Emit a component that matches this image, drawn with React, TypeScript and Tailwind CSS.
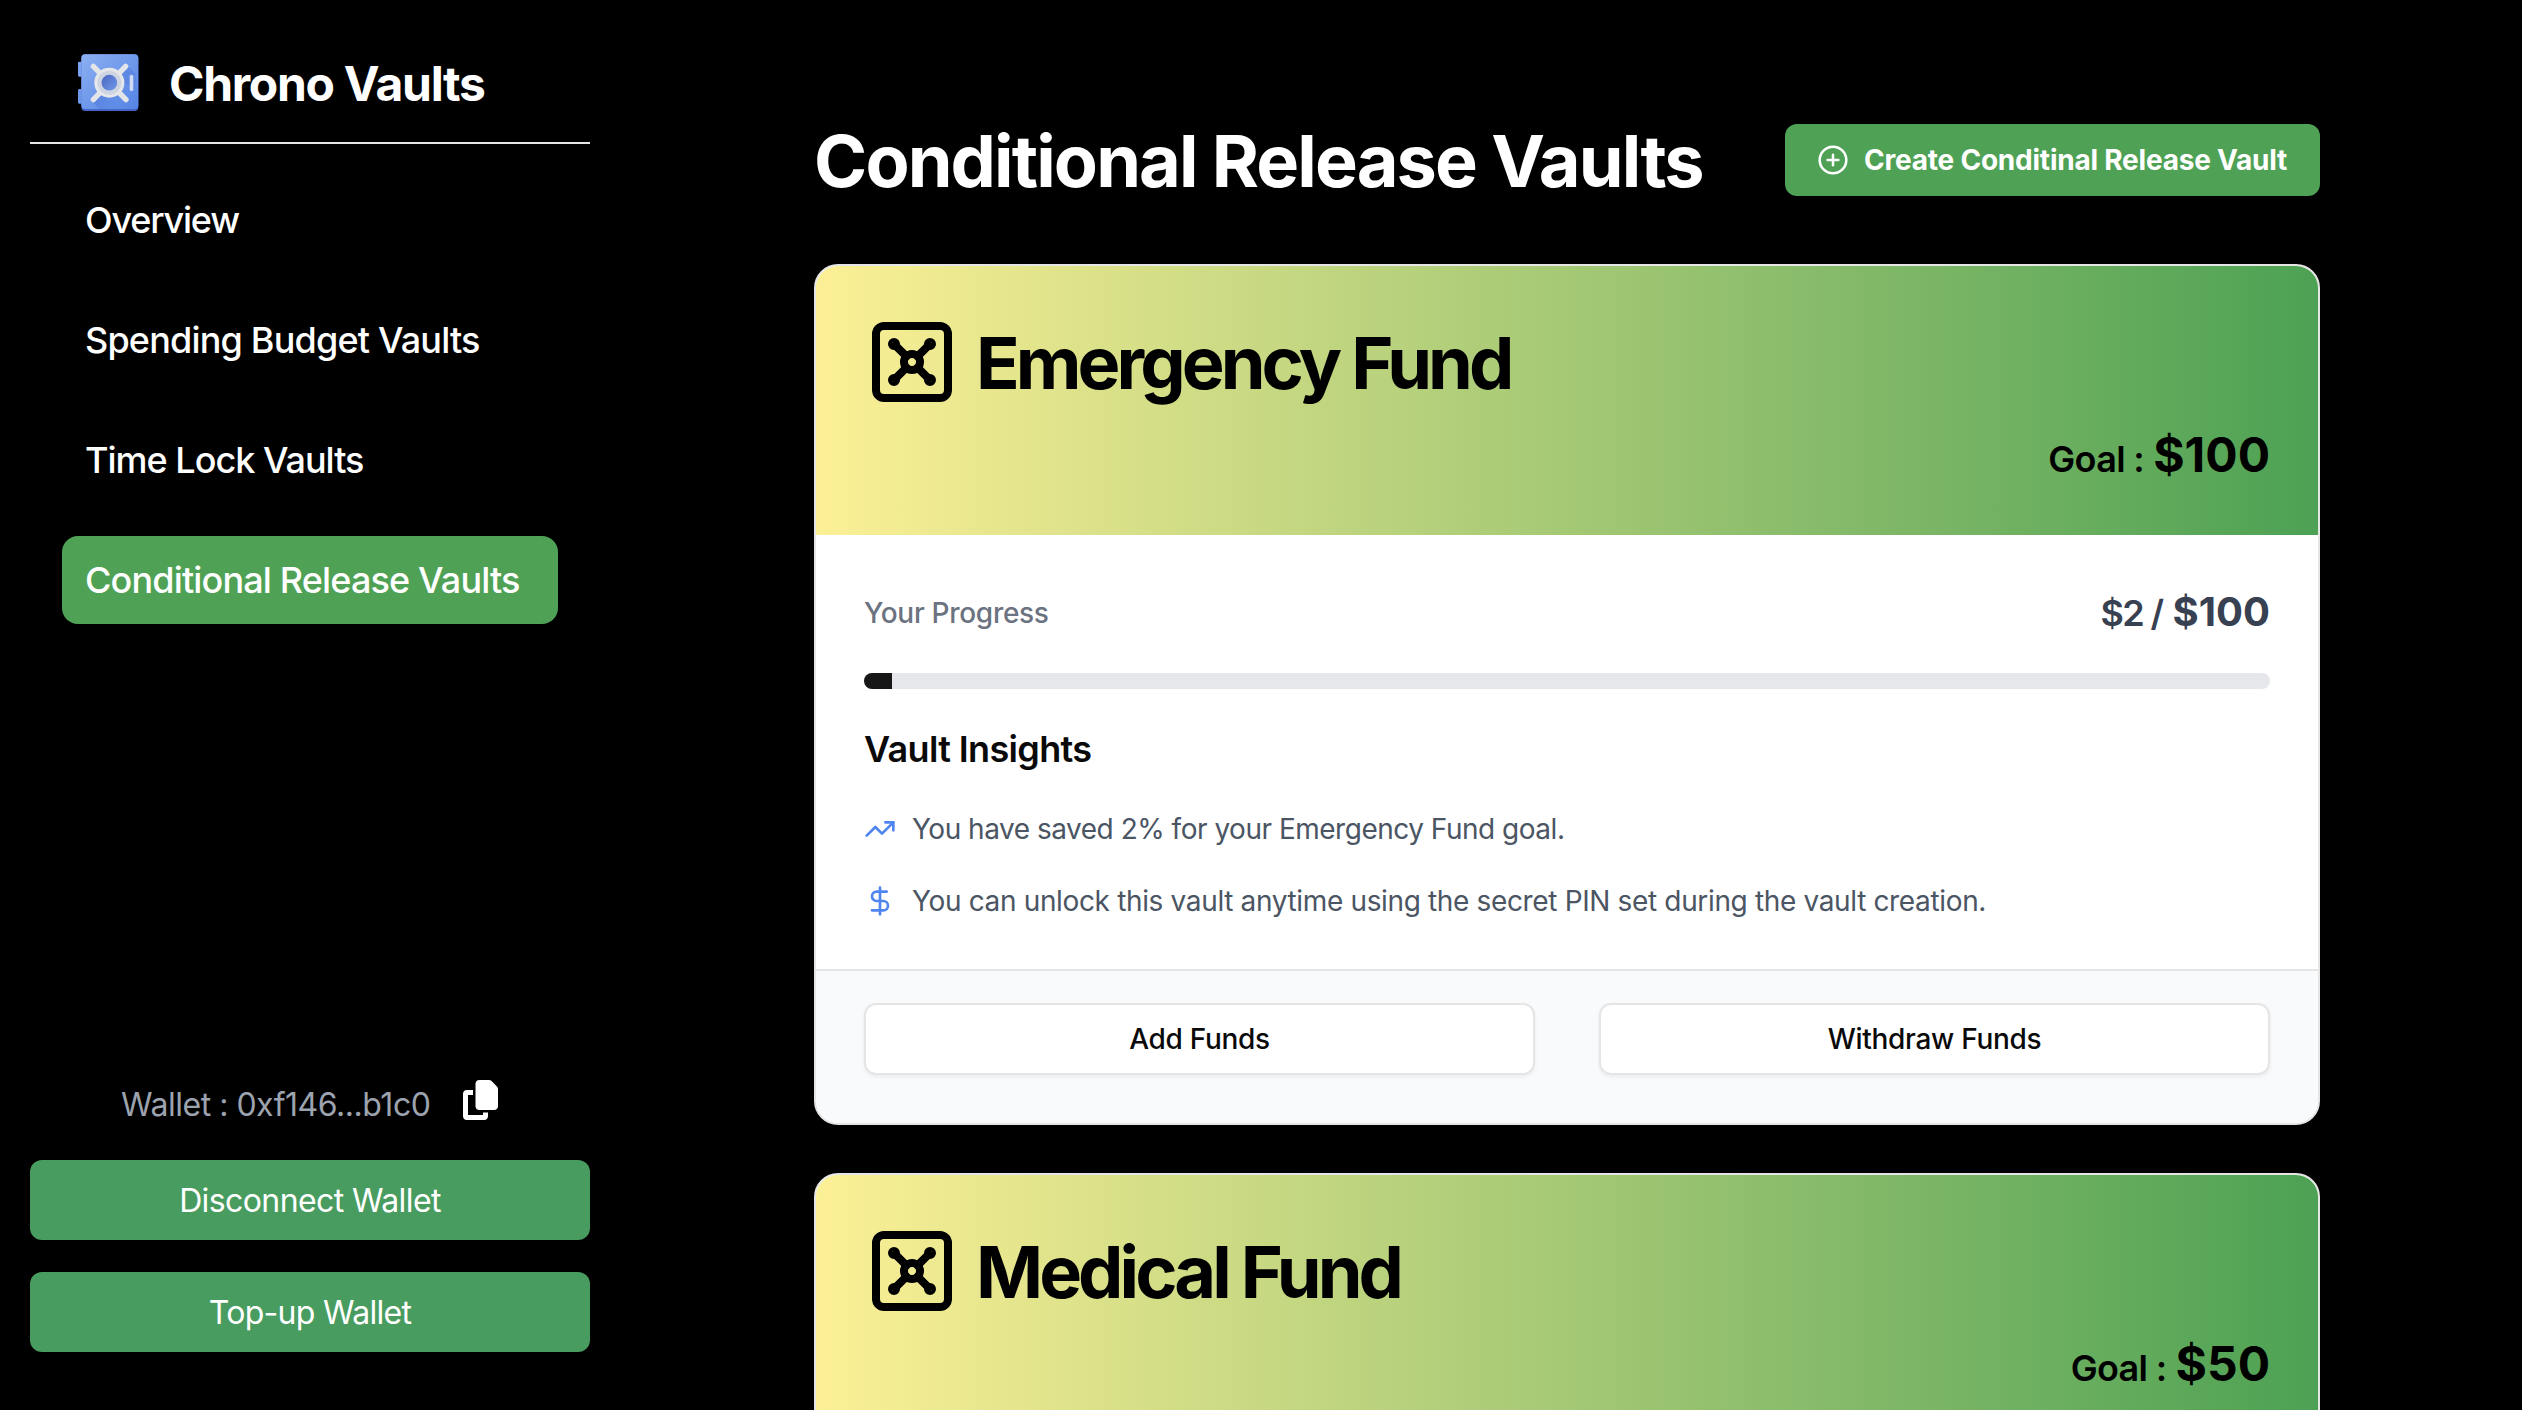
import React from "react";
import { CirclePlus, DollarSign, TrendingUp, Vault } from "lucide-react";
import { FaCopy } from "react-icons/fa6";

function Logo() {
  return (
    <svg viewBox="48 36 192 180" className="h-[60px] w-16 shrink-0" aria-hidden="true">
      <defs>
        <linearGradient id="door" x1="0" y1="0" x2="1" y2="1">
          <stop offset="0" stopColor="#8eb0f2" />
          <stop offset="0.5" stopColor="#6f99eb" />
          <stop offset="1" stopColor="#5584e4" />
        </linearGradient>
        <linearGradient id="shade" gradientUnits="userSpaceOnUse" x1="110" y1="120" x2="200" y2="160">
          <stop offset="0" stopColor="#4a72d4" stopOpacity="0.75" />
          <stop offset="1" stopColor="#5584e4" stopOpacity="0" />
        </linearGradient>
        <linearGradient id="hub" x1="0" y1="0" x2="1" y2="1">
          <stop offset="0" stopColor="#4a66bf" />
          <stop offset="1" stopColor="#6f98ea" />
        </linearGradient>
      </defs>
      <rect x="54" y="65" width="16" height="45" rx="4" fill="#7ba2ee" />
      <rect x="54" y="147" width="16" height="44" rx="4" fill="#6f97ea" />
      <rect x="64" y="43" width="171" height="170" rx="12" fill="#4667c8" />
      <rect x="64" y="43" width="171" height="164" rx="12" fill="url(#door)" />
      <path d="M96 184 L118 207 L200 207 L204 182 L160 130 Z" fill="url(#shade)" />
      <path d="M202 76 L226 100 L226 150 L196 130 L176 104 Z" fill="#5279da" opacity="0.45" />
      <path d="M100 79 L198 179 M197 79 L100 179" stroke="#e4e5e8" strokeWidth="16" strokeLinecap="round" />
      <circle cx="148" cy="128" r="45" fill="#e6e7e9" />
      <circle cx="148" cy="128" r="36" fill="#ced4e2" />
      <circle cx="148" cy="128" r="23.5" fill="url(#hub)" />
      <rect x="209" y="104" width="11" height="49" rx="5.5" fill="#cfdaf3" />
    </svg>
  );
}

const navItems = [
  { label: "Overview", tracking: "tracking-[-1.2px]" },
  { label: "Spending Budget Vaults", tracking: "tracking-[-0.82px]" },
  { label: "Time Lock Vaults", tracking: "tracking-[-1px]" },
  { label: "Conditional Release Vaults", tracking: "tracking-[-0.85px]", active: true },
];

function Sidebar() {
  return (
    <aside className="flex h-full w-[620px] shrink-0 flex-col px-[30px] pb-[58px]">
      <div className="flex h-[144px] shrink-0 items-center gap-[29px] border-b-2 border-[#e5e5e5] pt-[22px] pl-[46px]">
        <Logo />
        <span className="pt-[3px] text-5xl leading-[60px] font-bold tracking-[-1.3px]">Chrono Vaults</span>
      </div>
      <nav className="flex flex-col gap-8 px-8 pt-8">
        {navItems.map((item) => (
          <a
            key={item.label}
            className={`flex h-[88px] items-center rounded-2xl px-[23px] text-[36px] font-medium whitespace-nowrap ${item.tracking} ${
              item.active ? "bg-[#4fa255]" : ""
            }`}
          >
            {item.label}
          </a>
        ))}
      </nav>
      <div className="mt-auto flex flex-col">
        <div className="flex h-[60px] items-start gap-[33px] pb-5 pl-[91px]">
          <span className="pt-px text-[32px] leading-[48px] tracking-[-0.48px] text-[#9ca3af]">
            Wallet : 0xf146...b1c0
          </span>
          <FaCopy className="h-10 w-[35px]" />
        </div>
        <button className="mt-5 h-20 rounded-xl bg-[#489c60] pt-0.5 text-[32px] tracking-[-0.6px]">
          Disconnect Wallet
        </button>
        <button className="mt-8 h-20 rounded-xl bg-[#489c60] pt-0.5 text-[32px] tracking-[-0.7px]">
          Top-up Wallet
        </button>
      </div>
    </aside>
  );
}

interface VaultData {
  name: string;
  saved: number;
  goal: number;
}

function OutlineButton({ children }: { children: React.ReactNode }) {
  return (
    <button className="h-[72px] flex-1 rounded-xl border-2 border-[#e5e5e5] bg-white text-[28px] font-medium tracking-[-0.3px] text-[#0a0a0a] shadow-[0_2px_4px_rgba(0,0,0,0.06)]">
      {children}
    </button>
  );
}

function VaultCard({ name, saved, goal }: VaultData) {
  const percent = (saved / goal) * 100;
  return (
    <section className="shrink-0 overflow-hidden rounded-3xl border-2 border-[#e5e5e5] bg-white text-[#0a0a0a]">
      <header className="h-[269px] bg-[linear-gradient(to_right,#fcf096,#4da154)] px-12 pt-12 text-black">
        <div className="flex items-center gap-4">
          <Vault className="size-24" strokeWidth={2} />
          <h2 className="pt-px text-7xl font-bold tracking-[-3.93px] whitespace-nowrap">{name}</h2>
        </div>
        <div className="mt-4 flex items-baseline justify-end gap-[9px] leading-[57px]">
          <span className="text-[36px] font-semibold tracking-[-0.68px]">Goal :</span>
          <span className="text-5xl leading-[57px] font-bold">${goal}</span>
        </div>
      </header>
      <div className="px-12 pt-12 pb-12">
        <div className="flex h-[58px] items-center justify-between">
          <span className="pt-px text-[28px] font-medium tracking-[-0.3px] text-[#6b7280]">Your Progress</span>
          <span className="flex items-baseline gap-[10px] leading-[58px] text-[#374151]">
            <span className="text-[36px] font-semibold tracking-[-1.6px]">${saved} /</span>
            <span className="text-[40px] font-bold">${goal}</span>
          </span>
        </div>
        <div className="mt-8 h-4 overflow-hidden rounded-full bg-[#e5e7eb]">
          <div className="h-full bg-[#171717]" style={{ width: `${percent}%` }} />
        </div>
        <h3 className="mt-8 text-[36px] leading-[56px] font-semibold tracking-[-0.65px]">Vault Insights</h3>
        <ul className="mt-8 flex flex-col gap-8 text-[28px] leading-10 text-[#4b5563]">
          <li className="flex items-center gap-4">
            <TrendingUp className="size-8 text-[#5085f1]" />
            <span className="tracking-[-0.49px]">
              You have saved {percent}% for your {name} goal.
            </span>
          </li>
          <li className="flex items-center gap-4">
            <DollarSign className="size-8 text-[#5085f1]" />
            <span className="tracking-[-0.35px]">
              You can unlock this vault anytime using the secret PIN set during the vault creation.
            </span>
          </li>
        </ul>
      </div>
      <footer className="flex gap-16 border-t-2 border-[#e5e5e5] bg-[#f9fafc] px-12 pt-8 pb-12">
        <OutlineButton>Add Funds</OutlineButton>
        <OutlineButton>Withdraw Funds</OutlineButton>
      </footer>
    </section>
  );
}

const vaults: VaultData[] = [
  { name: "Emergency Fund", saved: 2, goal: 100 },
  { name: "Medical Fund", saved: 1, goal: 50 },
];

export default function App() {
  return (
    <div className="flex h-screen w-full overflow-hidden bg-black font-['Inter',sans-serif] text-white">
      <Sidebar />
      <main className="flex min-w-0 flex-1 flex-col pt-[124px] pr-[202px] pl-[194px]">
        <div className="flex h-[72px] shrink-0 items-center justify-between">
          <h1 className="pt-px text-7xl font-bold tracking-[-1.88px] whitespace-nowrap">
            Conditional Release Vaults
          </h1>
          <button className="flex h-[72px] w-[535px] items-center gap-[15px] rounded-xl bg-[#4fa255] px-8 text-[28px] font-bold tracking-[-0.22px] whitespace-nowrap">
            <CirclePlus className="size-8 shrink-0" strokeWidth={1.9} />
            Create Conditinal Release Vault
          </button>
        </div>
        <div className="mt-[68px] flex flex-col gap-12">
          {vaults.map((vault) => (
            <VaultCard key={vault.name} {...vault} />
          ))}
        </div>
      </main>
    </div>
  );
}
